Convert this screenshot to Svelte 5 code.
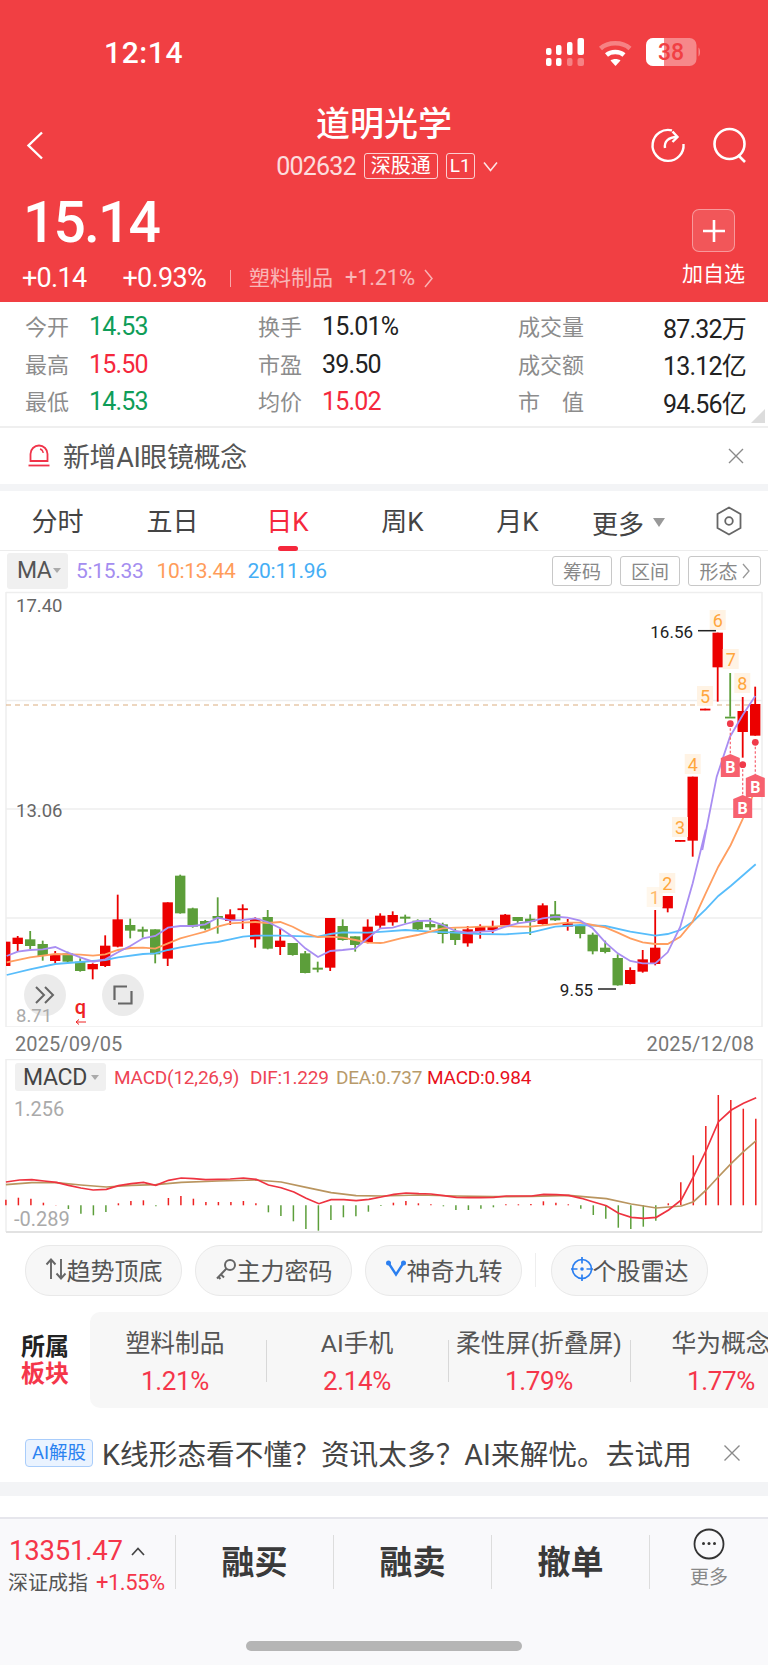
<script>
  // candles: [up, high, top, bottom, low], y in zoomed units, see py()
  const R = 1, G = 0;
  const candles = [
    [R,365,365,438,438],[R,348,353,372,395],[G,333,358,378,387],[G,362,372,408,422],[R,393,402,423,430],
    [G,395,400,425,428],[G,415,425,453,455],[R,430,432,448,478],[R,346,377,438,441],[R,224,298,380,382],
    [G,296,315,332,355],[G,320,328,335,353],[G,328,328,403,430],[R,247,247,416,438],[G,164,167,280,281],
    [G,263,265,320,323],[G,300,303,326,331],[G,232,288,296,341],[R,268,283,303,315],[R,253,265,270,327],
    [R,292,296,358,383],[G,270,291,386,388],[R,326,362,381,405],[G,369,369,405,407],[G,393,400,459,460],
    [G,425,443,449,457],[R,294,294,443,453],[G,298,318,360,362],[G,349,349,375,395],[R,298,320,368,370],
    [R,280,287,317,327],[R,274,285,307,317],[G,284,290,296,310],[G,298,302,328,332],[G,294,312,322,330],
    [G,308,313,342,370],[G,325,333,360,375],[R,318,328,370,380],[R,313,318,335,356],[R,302,320,330,340],
    [R,282,284,316,318],[G,291,291,303,310],[G,283,296,306,345],[R,250,256,312,314],[G,243,283,301,303],
    [R,297,310,320,332],[G,313,315,342,355],[G,338,344,394,403],[G,362,383,396,400],[G,403,414,496,497],
    [R,442,450,492,493],[R,390,418,455,458],[R,270,383,432,436],[R,228,228,265,277],[R,60,60,60,60],
    [R,-130,-130,62,110],[R,-334,-334,-334,-334],[R,-562,-562,-458,-355],[G,-441,-310,-310,-310],
    [R,-369,-327,-264,-187],[R,-400,-348,-253,-253]
  ];
  const cx = i => 5.2 + i * 12.5;
  const py = v => 820 + v / 3;
  const line = pts => pts.map(([x, y]) => `${(x / 3).toFixed(1)},${py(y).toFixed(1)}`).join(' ');
  const shift = pts => pts.map(([x, y]) => [x + 1152, y]);

  const ma5 = line([
    [20,408],[53,395],[90,390],[128,388],[166,381],[204,398],[241,412],[279,425],[316,418],[354,397],[391,378],[429,355],
    [466,348],[504,323],[541,318],[578,318],[616,313],[653,293],[691,301],[729,300],[766,295],[803,306],[841,325],[878,350],
    [916,385],[954,411],[991,393],[1028,390],[1066,386],[1103,355],[1141,325],
    ...shift([[26,323],[64,312],[101,303],[139,302],[176,315],[214,333],[251,338],[289,335],[326,333],[364,320],[401,310],
    [439,305],[476,295],[514,290],[551,293],[589,302],[626,325],[664,367],[701,400],[739,423],[776,430],[814,430],[851,397],
    [889,320],[926,190],[965,30]]),
    [2107,90],[2150,-130],[2190,-250],[2228,-315],[2266,-372]
  ]);
  const ma10 = line([
    [20,427],[90,412],[166,402],[241,404],[279,407],[316,403],[354,390],[391,384],[429,383],[466,386],[504,370],[541,355],
    [578,345],[616,335],[653,320],[691,310],[729,308],[766,306],[803,309],[841,306],[878,320],[916,340],[954,351],[991,350],
    [1028,353],[1066,360],[1103,368],[1141,369],
    ...shift([[0,368],[50,355],[100,345],[139,335],[176,325],[214,323],[251,322],[289,320],[326,320],[364,318],[401,320],
    [439,320],[476,316],[514,312],[551,308],[589,308],[626,315],[664,322],[701,338],[739,355],[776,367],[814,372],[851,372],
    [889,350],[926,305],[965,220],[1003,140],[1040,75],[1075,0]]),
    [2266,-90]
  ]);
  const ma20 = line([
    [20,465],[90,448],[166,432],[241,426],[316,420],[354,412],[429,402],[466,400],[504,390],[541,382],[616,370],[653,366],
    [691,358],[729,350],[766,347],[841,347],[916,349],[954,350],[991,342],[1028,337],[1103,338],
    ...shift([[0,335],[64,330],[139,335],[214,338],[289,342],[364,343],[439,338],[514,320],[589,315],[664,318],[739,335],
    [814,347],[851,342],[889,330],[926,305],[965,268],[1003,228],[1040,198],[1115,133]])
  ]);

  const marks = [
    { n: 1, x: 654.7, y: 897, faint: true }, { n: 2, x: 667.3, y: 883 }, { n: 3, x: 680, y: 827 }, { n: 4, x: 692.7, y: 764 },
    { n: 5, x: 705, y: 696 }, { n: 6, x: 717.7, y: 620 }, { n: 7, x: 730.7, y: 659 }, { n: 8, x: 742.3, y: 683 }
  ];
  const buys = [
    { x: 730.3, dot: 723.7, y: 755 }, { x: 742.7, dot: 764.7, y: 796 }, { x: 755.3, dot: 742.3, y: 775 }
  ];

  // macd panel coords: x / 2.0417, y = 1050 + v / 3
  const mx = v => (v / 2.0417).toFixed(1);
  const my = v => (1050 + v / 3).toFixed(1);
  const mline = pts => pts.map(([x, y]) => `${mx(x)},${my(y)}`).join(' ');
  const dif = mline([
    [12,396],[40,390],[65,389],[90,393],[115,397],[140,406],[165,414],[190,420],[217,418],[242,407],[268,401],[293,397],[318,406],
    [344,391],[370,384],[395,386],[420,389],[445,388],[470,387],[497,384],[523,388],[548,405],[574,413],[600,426],[625,445],[651,461],
    [676,449],[702,449],[727,452],[753,448],[778,441],[804,433],[829,429],[855,431],[880,432],[906,437],[932,442],[957,443],[982,443],
    [1008,442],[1034,438],[1059,438],[1085,438],[1110,433],[1136,434],[1161,436],[1187,445],[1212,456],[1238,467],[1263,490],[1289,502],
    [1314,505],[1340,502],[1365,480],[1391,450],[1416,380],[1442,300],[1467,215],[1493,180],[1518,160],[1544,143]
  ]);
  const dea = mline([
    [12,404],[65,398],[115,398],[165,405],[217,411],[268,406],[318,404],[370,397],[445,393],[523,390],[574,396],[625,412],[676,428],
    [727,437],[778,438],[855,435],[932,438],[1008,440],[1085,439],[1161,436],[1238,446],[1289,462],[1340,474],[1391,468],[1416,455],
    [1442,420],[1467,380],[1493,340],[1518,305],[1544,272]
  ]);
  const bars = [449,443,446,458,465,477,491,496,486,460,453,451,469,444,438,446,456,456,456,453,460,487,498,514,537,542,510,502,499,485,
    468,458,453,460,463,469,480,480,476,472,463,463,462,454,458,463,476,495,506,533,537,530,512,460,397,316,228,135,150,176,206];

  const stats = [
    [['今开', '14.53', 'down'], ['最高', '15.50', 'up'], ['最低', '14.53', 'down']],
    [['换手', '15.01%', ''], ['市盈', '39.50', ''], ['均价', '15.02', 'up']],
    [['成交量', '87.32万', ''], ['成交额', '13.12亿', ''], ['市　值', '94.56亿', '']]
  ];
  const tabs = ['分时', '五日', '日K', '周K', '月K'];
  const sectors = [['塑料制品', '1.21%'], ['AI手机', '2.14%'], ['柔性屏(折叠屏)', '1.79%'], ['华为概念', '1.77%']];
</script>

<div class="page">
  <header class="top">
    <div class="status">
      <span class="time">12:14</span>
      <svg class="sb" width="160" height="30" viewBox="0 0 160 30">
        <g fill="#fff">
          <rect x="0" y="11" width="5.5" height="7" rx="2"/><rect x="10" y="8" width="5.5" height="10" rx="2"/>
          <rect x="21" y="5" width="5.5" height="13" rx="2"/><rect x="31.5" y="1" width="6.5" height="17" rx="2"/>
          <rect x="0" y="21" width="5.5" height="8" rx="2"/><rect x="10" y="21" width="5.5" height="8" rx="2"/>
          <rect x="21" y="21" width="5.5" height="8" rx="2" opacity=".35"/><rect x="31.5" y="21" width="6.5" height="8" rx="2" opacity=".35"/>
        </g>
        <g fill="none" stroke="#fff" stroke-width="4.5">
          <path d="M54.5 11.5c7.500-7 22-7 29.500 0" opacity=".35"/>
          <path d="M60.500 18c4.500-4 13-4 17.500 0"/>
        </g>
        <path d="M69.500 29l-5-5.500c2.500-2 7.500-2 10 0z" fill="#fff"/>
        <rect x="100" y="1" width="50.500" height="28" rx="7" fill="#fff" opacity=".38"/>
        <path d="M107 1h11v28h-11a7 7 0 0 1-7-7V8a7 7 0 0 1 7-7z" fill="#fff"/>
        <path d="M152.500 10.500c2 1 2 8 0 9z" fill="#fff" opacity=".4"/>
        <text x="125" y="23" class="batt">38</text>
      </svg>
    </div>

    <div class="nav">
      <svg class="back" width="18" height="29" viewBox="0 0 18 29"><path d="M16 1.500L2.500 14.500L16 27.500" fill="none" stroke="#fff" stroke-width="2.400"/></svg>
      <div class="title">
        <div class="name">道明光学</div>
        <div class="sub">
          <span class="code">002632</span>
          <span class="tag">深股通</span>
          <span class="tag l1">L1</span>
          <svg width="15" height="11" viewBox="0 0 15 11"><path d="M1 1.500L7.500 9.500L14 1.500" fill="none" stroke="#fff" stroke-width="1.600" opacity=".85"/></svg>
        </div>
      </div>
      <svg class="act refresh" width="36" height="36" viewBox="0 0 36 36" fill="none" stroke="#fff" stroke-width="2.400">
        <path d="M22 3.400A15.500 15.500 0 1 0 33.500 17"/>
        <path d="M15 21c-1-6 3-11 12-11"/>
        <path d="M22.500 4.500l5 5.500-5 5"/>
      </svg>
      <svg class="act" width="36" height="36" viewBox="0 0 36 36" fill="none" stroke="#fff" stroke-width="2.600">
        <circle cx="17.500" cy="17" r="15"/><path d="M26 28l7 7"/>
      </svg>
    </div>

    <div class="quote">
      <div class="left">
        <div class="price">15.14</div>
        <div class="chg">
          <span class="c1">+0.14</span>
          <span class="c2">+0.93%</span>
          <i class="vr"></i>
          <span class="sect">塑料制品</span>
          <span class="sectv">+1.21%</span>
          <svg width="9" height="19" viewBox="0 0 9 19"><path d="M1 1l7 8.500-7 8.500" fill="none" stroke="#fff" stroke-width="1.500" opacity=".6"/></svg>
        </div>
      </div>
      <div class="add">
        <div class="plus">
          <svg width="24" height="24" viewBox="0 0 24 24"><path d="M12 1v22M1 12h22" stroke="#fff" stroke-width="2.600"/></svg>
        </div>
        <span>加自选</span>
      </div>
    </div>
  </header>

  <section class="stats">
    {#each stats as col, c}
      <div class="col col{c}">
        {#each col as [k, v, cls]}
          <div class="stat">
            <span class="k">{k}</span>
            <span class="v {cls}">{v}</span>
          </div>
        {/each}
      </div>
    {/each}
    <i class="corner"></i>
  </section>

  <section class="alert">
    <svg width="24" height="24" viewBox="0 0 24 24" fill="none" stroke="#f0344a" stroke-width="1.800">
      <path d="M3.500 18V11a8.500 8.500 0 0 1 17 0v7z"/><path d="M1.500 22.500h21"/><path d="M13 6c2 .5 3 2 3.200 4" stroke-width="1.300"/>
    </svg>
    <span class="alert-t">新增AI眼镜概念</span>
    <svg class="x" width="16" height="16" viewBox="0 0 16 16"><path d="M1 1l14 14M15 1L1 15" stroke="#8a8a8a" stroke-width="1.400"/></svg>
  </section>
  <div class="band"></div>

  <nav class="tabs">
    {#each tabs as t, i}
      <div class="tab" class:on={i === 2}>{t}</div>
    {/each}
    <div class="more">更多<i class="tri"></i></div>
    <svg class="hex" width="28" height="30" viewBox="0 0 28 30" fill="none" stroke="#666" stroke-width="1.800">
      <path d="M14 1.500l11.500 6.500v14L14 28.500 2.500 22V8z"/><circle cx="14" cy="15" r="3.800"/>
    </svg>
  </nav>

  <div class="ma-row">
    <div class="ma-box">MA<i class="tri-s"></i></div>
    <span class="ma m5">5:15.33</span>
    <span class="ma m10">10:13.44</span>
    <span class="ma m20">20:11.96</span>
    <div class="btns">
      <span class="btn">筹码</span>
      <span class="btn">区间</span>
      <span class="btn last">形态<svg width="8" height="16" viewBox="0 0 8 16"><path d="M1 1l6 7-6 7" fill="none" stroke="#999" stroke-width="1.300"/></svg></span>
    </div>
  </div>

  <div class="chart">
    <svg width="768" height="437" viewBox="0 590 768 437">
      <defs><clipPath id="kclip"><rect x="6" y="590" width="756" height="437"/></clipPath></defs>
      <g stroke="#eeeeee" stroke-width="1.500" fill="none">
        <path d="M6 592.500H762M6 700.500H762M6 809H762M6 918H762M6 1027H762M6 592V1027M762 592V1027"/>
      </g>
      <text x="16" y="611.500" class="axis">17.40</text>
      <text x="16" y="817" class="axis">13.06</text>
      <path d="M6 705H762" stroke="#dcae80" stroke-width="1.200" stroke-dasharray="5 4"/>

      <g clip-path="url(#kclip)">
        {#each candles as [up, hi, top, bot, lo], i}
          {@const c = up ? '#ec0000' : '#5c9e3a'}
          <rect x={cx(i) - 0.9} y={py(hi)} width="1.800" height={Math.max(py(lo) - py(hi), 1.500)} fill={c}/>
          <rect x={cx(i) - 5.200} y={py(top)} width="10.400" height={Math.max(py(bot) - py(top), 1.800)} fill={c}/>
        {/each}
        <polyline points={ma20} fill="none" stroke="#58bdfb" stroke-width="1.800"/>
        <polyline points={ma10} fill="none" stroke="#ff9e60" stroke-width="1.800"/>
        <polyline points={ma5} fill="none" stroke="#a98ef2" stroke-width="1.800"/>
      </g>

      {#each marks as m}
        <rect x={m.x - 8} y={m.y - 10} width="16" height="20" fill="#fff3e4" opacity={m.faint ? 0.7 : 1}/>
        <text x={m.x} y={m.y + 6.500} class="mark" opacity={m.faint ? 0.75 : 1}>{m.n}</text>
      {/each}

      {#each buys as b}
        <path d={`M${b.x} ${b.dot}V${b.y}`} stroke="#f7616f" stroke-width="1.200" stroke-dasharray="2.500 2"/>
        <circle cx={b.x} cy={b.dot} r="3.400" fill="#f03a4a"/>
        <path d={`M${b.x - 9.500} ${b.y + 3}L${b.x} ${b.y - 1}L${b.x + 9.500} ${b.y + 3}V${b.y + 22}H${b.x - 9.500}Z`} fill="#f7616f"/>
        <text x={b.x} y={b.y + 18} class="buy">B</text>
      {/each}

      <text x="693" y="637.500" class="hl end">16.56</text>
      <path d="M698 630.700H716" stroke="#222" stroke-width="1.500"/>
      <text x="593" y="996" class="hl end">9.55</text>
      <path d="M598 989H616" stroke="#222" stroke-width="1.500"/>

      <circle cx="45" cy="995" r="21" fill="#ebebeb"/>
      <circle cx="123" cy="995" r="21" fill="#ebebeb"/>
      <path d="M36 987l8 8-8 8M45 987l8 8-8 8" fill="none" stroke="#666" stroke-width="2"/>
      <path d="M114.500 1000V986.500H127M118 1003.500h13.500V991" fill="none" stroke="#666" stroke-width="2.200"/>

      <text x="16" y="1021.500" class="axis light">8.71</text>
      <text x="80.500" y="1014" class="q">q</text>
      <path d="M76 1022h10M76 1022l3-2.500M76 1022l3 2.500" stroke="#ee2222" stroke-width="1" fill="none"/>
    </svg>
  </div>

  <div class="dates"><span>2025/09/05</span><span>2025/12/08</span></div>

  <div class="macd">
    <svg width="768" height="174" viewBox="0 1059 768 174">
      <path d="M6 1059.500H762M6 1059V1232M762 1059V1232" stroke="#eeeeee" stroke-width="1.500" fill="none"/>
      <path d="M6 1232H762" stroke="#e2e2e2" stroke-width="1.800"/>
      <text x="14" y="1116" class="axis light big">1.256</text>
      <text x="14" y="1226" class="axis light big">-0.289</text>
      {#each bars as b, i}
        {@const x = (12 + i * 25.52) / 2.0417}
        {@const up = b <= 466}
        <path d={`M${x.toFixed(1)} ${my(466)}V${my(b)}`} stroke={up ? '#ee2020' : '#5c9e3a'} stroke-width="1.500"/>
      {/each}
      <polyline points={dea} fill="none" stroke="#b9955f" stroke-width="1.700"/>
      <polyline points={dif} fill="none" stroke="#ee3340" stroke-width="1.700"/>
    </svg>
    <div class="macd-head">
      <div class="macd-box">MACD<i class="tri-s"></i></div>
      <span class="ml a">MACD(12,26,9)</span>
      <span class="ml b">DIF:1.229</span>
      <span class="ml c">DEA:0.737</span>
      <span class="ml d">MACD:0.984</span>
    </div>
  </div>

  <div class="chips">
    <div class="chip">
      <svg width="22" height="24" viewBox="0 0 22 24" fill="none" stroke="#666" stroke-width="1.900"><path d="M6 22V3M1.500 7.500L6 2.500l4.500 5M16 2v19M11.500 16.500L16 21.500l4.500-5"/></svg>
      趋势顶底
    </div>
    <div class="chip">
      <svg width="22" height="24" viewBox="0 0 22 24" fill="none" stroke="#666" stroke-width="2"><circle cx="15" cy="8" r="5"/><path d="M11.500 11.500L2 21.500M6 17.500l3 3M3.500 20l2 2"/></svg>
      主力密码
    </div>
    <div class="chip">
      <svg width="22" height="20" viewBox="0 0 22 20" fill="none" stroke="#2b7ff0" stroke-width="2.400"><path d="M3.500 4L11 15.500 18.500 4"/><circle cx="3.500" cy="4" r="2.500" fill="#2b7ff0" stroke="none"/><circle cx="18.500" cy="4" r="2.500" fill="#2b7ff0" stroke="none"/></svg>
      神奇九转
    </div>
    <i class="chip-vr"></i>
    <div class="chip">
      <svg width="22" height="24" viewBox="0 0 22 24" fill="none" stroke="#2b7ff0" stroke-width="1.700"><circle cx="11" cy="12" r="9.500"/><path d="M11 0v6.500M11 17.500V24M0 12h6.500M15.500 12H22"/><circle cx="11" cy="12" r="1.800" fill="#2b7ff0" stroke="none"/></svg>
      个股雷达
    </div>
  </div>

  <div class="sector">
    <div class="sec-h"><b>所属</b><b class="red">板块</b></div>
    <div class="sec-list">
      {#each sectors as [n, p]}
        <div class="sec">
          <span class="sec-n">{n}</span>
          <span class="sec-p">{p}</span>
        </div>
      {/each}
    </div>
  </div>

  <div class="ai">
    <span class="ai-tag">AI解股</span>
    <span class="ai-t">K线形态看不懂？资讯太多？AI来解忧。去试用</span>
    <svg class="ai-x" width="18" height="18" viewBox="0 0 18 18"><path d="M1.500 1.500l15 15M16.500 1.500l-15 15" stroke="#8a8a8a" stroke-width="1.400"/></svg>
  </div>
  <div class="band big"></div>

  <footer class="foot">
    <div class="idx">
      <div class="idx-a">13351.47<svg width="14" height="9" viewBox="0 0 14 9"><path d="M1 8l6-6.500L13 8" fill="none" stroke="#444" stroke-width="1.700"/></svg></div>
      <div class="idx-b"><span>深证成指</span><span class="red">+1.55%</span></div>
    </div>
    <div class="act-b">融买</div>
    <div class="act-b">融卖</div>
    <div class="act-b">撤单</div>
    <div class="more-b">
      <svg width="32" height="32" viewBox="0 0 32 32"><circle cx="16" cy="16" r="14.500" fill="none" stroke="#333" stroke-width="1.800"/><g fill="#333"><circle cx="10.500" cy="15.500" r="1.500"/><circle cx="16" cy="15.500" r="1.500"/><circle cx="21.500" cy="15.500" r="1.500"/></g></svg>
      <span>更多</span>
    </div>
    <i class="home"></i>
  </footer>
</div>

<style>
  :global(body) { margin: 0; background: #fff; }
  .page {
    width: 768px;
    height: 1665px;
    overflow: hidden;
    font-family: Roboto, "Noto Sans CJK SC", sans-serif;
    color: #333;
  }
  i { display: block; }

  .top { height: 302px; background: #f13f43; color: #fff; box-sizing: border-box; }
  .status { height: 76px; position: relative; display: flex; justify-content: space-between; }
  .time { margin: 35px 0 0 104px; font-size: 30px; line-height: 36px; font-weight: 500; letter-spacing: .6px; }
  .sb { margin: 37px 62px 0 0; }
  .batt { font: 500 23px Roboto, sans-serif; fill: #f13f43; text-anchor: middle; }

  .nav { height: 102px; display: flex; align-items: flex-start; position: relative; }
  .back { position: absolute; left: 26px; top: 55px; }
  .title { width: 100%; text-align: center; }
  .name { font-size: 34px; line-height: 40px; margin-top: 28px; font-weight: 500; }
  .sub { display: flex; justify-content: center; align-items: center; gap: 8px; height: 26px; margin-top: 9px; padding-left: 6px; }
  .code { font-size: 25px; letter-spacing: -.8px; opacity: .82; }
  .tag { border: 1px solid rgba(255,255,255,.75); border-radius: 3px; font-size: 20px; line-height: 24px; padding: 0 6px; height: 24px; }
  .tag.l1 { padding: 0 3px; font-size: 19px; }
  .act { position: absolute; top: 51px; left: 712px; }
  .act.refresh { left: 650px; }

  .quote { height: 124px; display: flex; justify-content: space-between; position: relative; }
  .price { font-size: 57px; line-height: 64px; margin: 13px 0 0 23px; font-weight: 500; letter-spacing: -1.900px; }
  .chg { display: flex; align-items: center; height: 28px; margin: 9px 0 0 22px; }
  .c1, .c2 { font-size: 27px; letter-spacing: -.7px; }
  .c2 { margin-left: 36px; }
  .vr { width: 1px; height: 17px; background: rgba(255,255,255,.55); margin: 0 18px 0 24px; }
  .sect { font-size: 21px; opacity: .62; margin-bottom: 5px; }
  .sectv { font-size: 22px; opacity: .62; margin: 0 9px 2px 12px; letter-spacing: -.3px; }
  .add { width: 87px; margin-right: 11px; display: flex; flex-direction: column; align-items: center; }
  .plus { width: 41px; height: 41px; margin-top: 31px; border: 1px solid rgba(255,255,255,.4); background: rgba(255,255,255,.12); border-radius: 7px; display: flex; align-items: center; justify-content: center; }
  .add span { font-size: 21px; line-height: 24px; margin-top: 10px; }

  .stats { height: 126px; box-sizing: border-box; border-bottom: 2px solid #efefef; position: relative; display: flex; padding-top: 6px; }
  .col { display: flex; flex-direction: column; }
  .col0 { width: 233px; padding-left: 25px; box-sizing: border-box; }
  .col1 { width: 260px; padding-left: 25px; box-sizing: border-box; }
  .col2 { width: 275px; padding: 0 22px 0 25px; box-sizing: border-box; }
  .stat { height: 37.500px; display: flex; align-items: center; }
  .k { font-size: 22px; color: #8c8c8c; width: 64px; flex: none; margin-bottom: 3px; }
  .col2 .k { width: auto; }
  .v { font-size: 25px; letter-spacing: -.8px; color: #222; }
  .col2 .v { margin-left: auto; }
  .v.up { color: #f5283c; }
  .v.down { color: #0f9d58; }
  .corner { position: absolute; right: 3px; bottom: 3px; width: 0; height: 0; border-left: 14px solid transparent; border-bottom: 14px solid #dcdcdc; }

  .alert { height: 56px; display: flex; align-items: center; padding: 0 0 2px 27px; position: relative; box-sizing: border-box; }
  .alert-t { font-size: 27px; color: #555; margin-left: 12px; letter-spacing: -.4px; }
  .x { position: absolute; left: 728px; top: 20px; }
  .band { height: 7px; background: #f3f4f6; }
  .band.big { height: 14px; }

  .tabs { height: 60px; border-bottom: 1px solid #ececec; box-sizing: border-box; display: flex; align-items: center; position: relative; }
  .tab { width: 115px; text-align: center; font-size: 26px; color: #444; position: relative; height: 60px; line-height: 63px; }
  .tab.on { color: #f5283c; }
  .tab.on::after { content: ''; position: absolute; left: 48px; bottom: 0; width: 20px; height: 5px; border-radius: 3px; background: #f5283c; }
  .more { font-size: 26px; color: #444; display: flex; align-items: center; margin: 4px 0 0 17px; gap: 9px; }
  .tri { width: 0; height: 0; border: 6px solid transparent; border-top: 9px solid #999; border-bottom: 0; }
  .hex { position: absolute; left: 715px; top: 15px; }

  .ma-row { height: 39px; display: flex; align-items: center; position: relative; }
  .ma-box { margin-left: 7px; width: 61px; height: 36px; background: #f0f0f0; border-radius: 3px; display: flex; align-items: center; padding-left: 10px; box-sizing: border-box; font-size: 23px; color: #555; letter-spacing: -.5px; gap: 2px; }
  .tri-s { width: 0; height: 0; border: 4px solid transparent; border-top: 5px solid #aaa; border-bottom: 0; }
  .ma { font-size: 21px; letter-spacing: -.3px; }
  .m5 { color: #a48df0; margin-left: 8px; }
  .m10 { color: #ff9c5a; margin-left: 13px; }
  .m20 { color: #45aef5; margin-left: 12px; }
  .btns { margin-left: auto; margin-right: 7px; display: flex; gap: 8px; }
  .btn { width: 60px; height: 30px; box-sizing: border-box; border: 1px solid #c8c8c8; border-radius: 3px; font-size: 19px; color: #888; display: flex; align-items: center; justify-content: center; gap: 4px; }
  .btn.last { width: 73px; }

  .chart { height: 437px; }
  .chart svg { display: block; }
  .axis { font: 400 18.500px Roboto, sans-serif; fill: #666; }
  .axis.light { fill: #aaa; }
  .axis.big { font-size: 20px; }
  .mark { font: 400 18px Roboto, sans-serif; fill: #ffa63c; text-anchor: middle; }
  .buy { font: 700 16px Roboto, sans-serif; fill: #fff; text-anchor: middle; }
  .hl { font: 400 17px Roboto, sans-serif; fill: #222; }
  .end { text-anchor: end; }
  .q { font: 500 20px Roboto, sans-serif; fill: #ee2222; text-anchor: middle; }

  .dates { height: 32px; box-sizing: border-box; padding: 2px 14px 0 15px; display: flex; justify-content: space-between; align-items: center; font-size: 20px; color: #777; letter-spacing: .1px; }

  .macd { height: 174px; position: relative; }
  .macd svg { display: block; }
  .macd-head { position: absolute; left: 15px; top: 4px; display: flex; align-items: center; height: 28px; }
  .macd-box { width: 91px; height: 28px; background: #f0f0f0; border-radius: 3px; font-size: 23px; color: #444; display: flex; align-items: center; gap: 4px; padding-left: 8px; box-sizing: border-box; letter-spacing: -.3px; }
  .ml { font-size: 19px; letter-spacing: -.2px; }
  .ml.a { color: #ee4455; margin-left: 8px; width: 136px; }
  .ml.b { color: #ee4455; width: 86px; }
  .ml.c { color: #b89a6a; width: 91px; }
  .ml.d { color: #e8101c; }

  .chips { height: 79px; box-sizing: border-box; padding: 12px 0 0 25px; display: flex; align-items: flex-start; }
  .chip { width: 157px; height: 51px; box-sizing: border-box; margin-right: 13px; padding-bottom: 3px; border: 1px solid #e9e9e9; background: #f7f7f7; border-radius: 25px; display: flex; align-items: center; justify-content: center; gap: 0; font-size: 24px; color: #555; }
  .chip-vr { width: 1px; height: 34px; margin: 8px 15px 0 0; background: #eee; }

  .sector { height: 96px; display: flex; }
  .sec-h { width: 90px; padding-left: 21px; box-sizing: border-box; display: flex; flex-direction: column; justify-content: center; font-size: 24px; line-height: 27px; padding-top: 2px; color: #222; }
  .sec-h b { font-weight: 700; }
  .red { color: #f5364a; }
  .sec-list { flex: 1; background: #f7f7f7; border-radius: 10px 0 0 10px; display: flex; overflow: hidden; align-items: center; padding-top: 14px; box-sizing: border-box; }
  .sec { width: 182px; flex: none; text-align: center; display: flex; flex-direction: column; align-items: center; position: relative; height: 76px; }
  .sec:first-child { margin-left: -6px; }
  .sec + .sec::before { content: ''; position: absolute; left: 0; top: 11px; height: 42px; width: 1px; background: #d8d8d8; }
  .sec-n { font-size: 24.800px; line-height: 30px; color: #555; white-space: nowrap; }
  .sec-p { font-size: 26px; line-height: 32px; margin-top: 6px; color: #f5364a; letter-spacing: -.3px; }

  .ai { height: 74px; box-sizing: border-box; padding: 15px 0 0 25px; display: flex; align-items: center; position: relative; }
  .ai-tag { width: 68px; height: 28px; box-sizing: border-box; background: #eaf3ff; border: 1px solid #a9cdfb; border-radius: 4px; color: #2a82f0; font-size: 18.500px; line-height: 26px; text-align: center; white-space: nowrap; }
  .ai-t { font-size: 28.600px; color: #444; margin-left: 9px; white-space: nowrap; letter-spacing: .1px; }
  .ai-x { position: absolute; left: 723px; top: 36px; }

  .foot { margin-top: 21px; height: 148px; border-top: 2px solid #e6e6ec; background: #f9f9fb; box-sizing: border-box; display: flex; position: relative; padding-top: 16px; }
  .idx { width: 176px; flex: none; height: 54px; border-right: 1px solid #ddd; padding-left: 9px; box-sizing: border-box; }
  .idx-a { font-size: 27.500px; line-height: 30px; color: #f5364a; display: flex; align-items: center; gap: 8px; letter-spacing: -.2px; margin-top: 1px; }
  .idx-b { font-size: 20px; line-height: 28px; margin-top: 3px; color: #555; white-space: nowrap; display: flex; gap: 8px; margin-left: -1px; }
  .idx-b .red { font-size: 22px; letter-spacing: -.5px; }
  .act-b { width: 158px; flex: none; height: 54px; border-right: 1px solid #ddd; box-sizing: border-box; text-align: center; font-size: 33px; line-height: 56px; font-weight: 700; color: #3a3a3a; }
  .more-b { flex: 1; display: flex; flex-direction: column; align-items: center; margin-top: -7px; }
  .more-b span { font-size: 19px; color: #888; line-height: 24px; margin-top: 6px; }
  .home { position: absolute; left: 246px; top: 122px; width: 276px; height: 10px; border-radius: 5px; background: #b5b5b5; }
</style>
